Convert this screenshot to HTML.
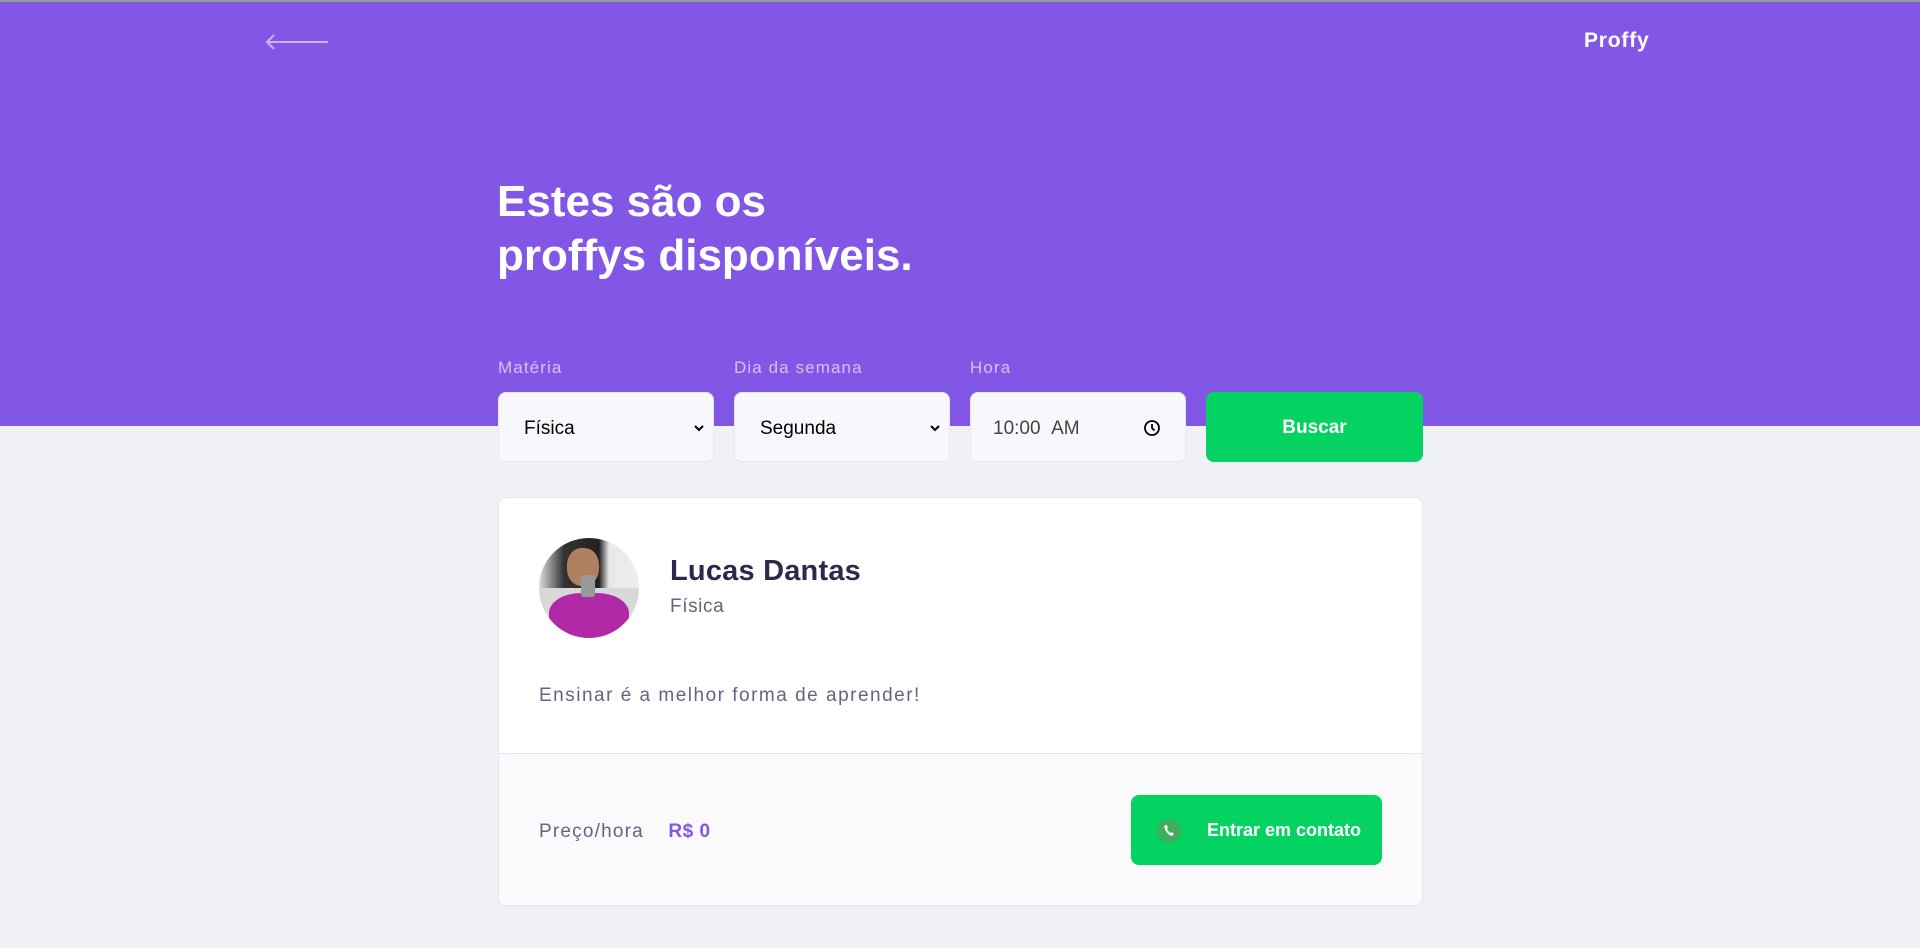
<!DOCTYPE html>
<html><head><meta charset="utf-8"><style>
*{margin:0;padding:0;box-sizing:border-box}
body{width:1920px;height:948px;background:#F0F0F7;font-family:"Liberation Sans",sans-serif;position:relative;overflow:hidden}
.top{position:absolute;left:0;top:0;width:1920px;height:426px;background:#8257E5;border-top:2px solid #9a9a9a}
.abs{position:absolute}
.h1{left:497px;top:175px;color:#fff;font-weight:bold;font-size:44px;line-height:54px}
.lbl{top:358px;color:#D4C2FF;font-size:17px;letter-spacing:1.1px}
.inp{top:392px;width:216px;height:70px;background:#F8F8FC;border:1px solid #E6E6F0;border-radius:8px;font-size:19px;color:#000;display:flex;align-items:center;padding-left:25px;padding-top:4px}
.btn{top:392px;left:1206px;width:217px;height:70px;background:#04D361;border-radius:8px;color:#fff;font-weight:bold;font-size:19px;display:flex;align-items:center;justify-content:center;padding-top:2px}
.card{left:498px;top:497px;width:925px;height:409px;background:#fff;border:1px solid #E6E6F0;border-radius:8px;overflow:hidden}
.foot{position:absolute;left:0;top:255px;width:100%;height:154px;background:#FAFAFC;border-top:1px solid #E6E6F0}
</style></head><body>
<div class="top"></div>
<svg class="abs" style="left:264px;top:33px" width="66" height="18"><path d="M3 9H64M10 2L3 9L10 16" stroke="#C7B4F5" stroke-width="2" fill="none"/></svg>
<div class="abs" style="left:1584px;top:29px;color:#fff;font-weight:bold;font-size:21px;letter-spacing:0.8px">Proffy</div>
<div class="abs h1">Estes são os<br>proffys disponíveis.</div>
<div class="abs lbl" style="left:498px">Matéria</div>
<div class="abs lbl" style="left:734px">Dia da semana</div>
<div class="abs lbl" style="left:970px">Hora</div>
<div class="abs inp" style="left:498px">Física<svg class="abs" style="right:8px;top:30px" width="12" height="10"><path d="M2 3L6 7L10 3" stroke="#000" stroke-width="2" fill="none"/></svg></div>
<div class="abs inp" style="left:734px">Segunda<svg class="abs" style="right:8px;top:30px" width="12" height="10"><path d="M2 3L6 7L10 3" stroke="#000" stroke-width="2" fill="none"/></svg></div>
<div class="abs inp" style="left:970px;padding-left:22px;color:#444">10:00&nbsp;&nbsp;AM<svg class="abs" style="right:24px;top:26px" width="18" height="18"><circle cx="9" cy="9" r="7" stroke="#000" stroke-width="1.8" fill="none"/><path d="M9 5V9L11.5 11.5" stroke="#000" stroke-width="1.8" fill="none"/></svg></div>
<div class="abs btn">Buscar</div>
<div class="abs card">
  <div class="abs" style="left:40px;top:40px;width:100px;height:100px;border-radius:50%;overflow:hidden;background:#d8d8d8">
    <div class="abs" style="left:0;top:0;width:100px;height:50px;background:linear-gradient(90deg,#ddd 0,#333 25%,#222 60%,#e8e8e8 70%,#eee 100%)"></div>
    <div class="abs" style="left:28px;top:10px;width:32px;height:38px;border-radius:45%;background:#b08060"></div>
    <div class="abs" style="left:10px;top:55px;width:80px;height:50px;border-radius:40% 40% 0 0;background:#b02aa8"></div>
    <div class="abs" style="left:42px;top:37px;width:14px;height:22px;border-radius:3px;background:#999"></div>
  </div>
  <div class="abs" style="left:171px;top:57px;font-size:29px;font-weight:bold;color:#32264D;letter-spacing:0.2px">Lucas Dantas</div>
  <div class="abs" style="left:171px;top:98px;font-size:19px;color:#6A6180;letter-spacing:0.6px">Física</div>
  <div class="abs" style="left:40px;top:187px;font-size:19px;color:#6A6180;letter-spacing:1.5px">Ensinar é a melhor forma de aprender!</div>
  <div class="foot">
    <div class="abs" style="left:40px;top:67px;font-size:19px;color:#6A6180;letter-spacing:1.2px">Preço/hora <span style="color:#8257E5;font-weight:bold;margin-left:18px;letter-spacing:0.5px">R$ 0</span></div>
    <div class="abs" style="left:632px;top:41px;width:251px;height:70px;background:#04D361;border-radius:8px;color:#fff;font-weight:bold;font-size:18px;display:flex;align-items:center;padding-left:76px">Entrar em contato
      <svg class="abs" style="left:25px;top:23px" width="26" height="26"><circle cx="13" cy="13" r="12" fill="#3FAE5A"/><path d="M9 7C8 8 8 10 10 13C12 16 14 18 16 18L18 16L16 14L14.5 15C13 14 12 13 11 11L12 9.5L10.5 7Z" fill="#fff"/></svg>
    </div>
  </div>
</div>
</body></html>
